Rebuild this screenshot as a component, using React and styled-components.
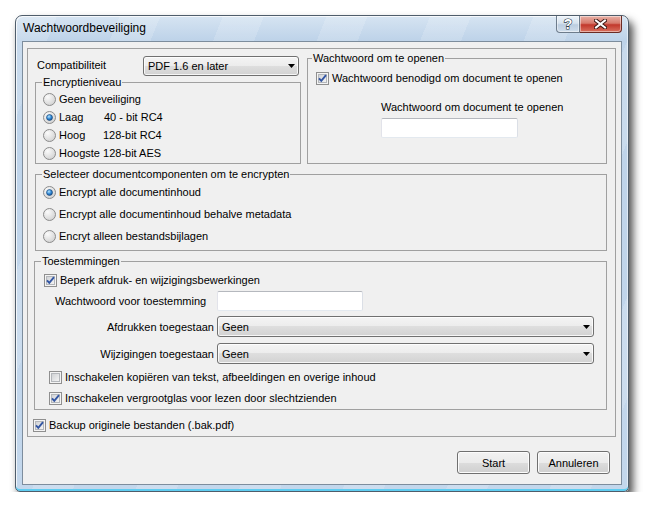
import React from 'react';
import styled, { createGlobalStyle } from 'styled-components';

const GlobalStyle = createGlobalStyle`
  html, body {
    margin: 0;
    background: #fff;
  }
  body {
    font-family: "Liberation Sans", Arial, sans-serif;
    font-size: 11px;
    color: #000;
  }
  * {
    box-sizing: border-box;
  }
`;

const Page = styled.div`
  padding: 15px 0 0 15px;
`;

const Window = styled.div`
  width: 614px;
  height: 477px;
  display: flex;
  flex-direction: column;
  border: 1px solid #4f5d6b;
  border-radius: 7px 7px 5px 5px;
  background:
    repeating-linear-gradient(112deg, rgba(255, 255, 255, 0.16) 0 38px, rgba(255, 255, 255, 0) 38px 96px),
    linear-gradient(180deg, #d6e4f2 0, #bed3e9 24px, #c3d7ec 100%);
  box-shadow:
    inset 0 -2px 0 #5fcdf1,
    inset 1px 1px 0 rgba(255, 255, 255, 0.75),
    inset -1px 0 0 rgba(255, 255, 255, 0.5),
    4px 6px 9px rgba(0, 0, 0, 0.7);
`;

const TitleBar = styled.div`
  height: 25px;
  display: flex;
  justify-content: space-between;
  align-items: flex-start;
`;

const Title = styled.div`
  padding-left: 7px;
  line-height: 25px;
  font-size: 12px;
`;

const CaptionGroup = styled.div`
  display: flex;
  margin-right: 6px;
`;

const CaptionButton = styled.div`
  width: ${({ $w }) => $w}px;
  height: 17px;
  display: flex;
  align-items: center;
  justify-content: center;
  border: 1px solid ${({ $close }) => ($close ? '#6b2b24' : '#6d7c8c')};
  border-top: none;
  border-left-width: ${({ $close }) => ($close ? 0 : 1)}px;
  border-radius: ${({ $close }) => ($close ? '0 0 4px 0' : '0 0 0 4px')};
  background: ${({ $close }) =>
    $close
      ? 'linear-gradient(180deg, #e8b1a6 0, #d77a6c 45%, #c2382c 55%, #d9715f 100%)'
      : 'linear-gradient(180deg, #edf3f9 0, #d7e3ef 45%, #bccde0 55%, #d0deec 100%)'};
  box-shadow: inset 0 0 0 1px rgba(255, 255, 255, 0.45);
`;

const Client = styled.div`
  flex: 1;
  margin: 0 6px 6px 6px;
  display: flex;
  flex-direction: column;
  background: #f0f0f0;
  border: 1px solid #7d8d9d;
`;

const Panel = styled.div`
  flex: 1;
  margin: 6px 5px 0 4px;
  padding: 3px 8px 2px 7px;
  display: flex;
  flex-direction: column;
  border: 1px solid #a0a0a0;
`;

const TopRow = styled.div`
  height: 112px;
  display: grid;
  grid-template-columns: 266px 300px;
  column-gap: 6px;
`;

const Column = styled.div`
  display: flex;
  flex-direction: column;
`;

const CompatRow = styled.div`
  height: 20px;
  margin-top: 4px;
  padding: 0 2px;
  display: flex;
  align-items: center;
  justify-content: space-between;
`;

const CompatLabel = styled.span`
  margin-bottom: 3px;
`;

const Group = styled.fieldset`
  margin: ${({ $top = 0 }) => $top}px 0 0 ${({ $left = 0 }) => $left}px;
  min-width: 0;
  flex: ${({ $grow }) => ($grow ? 1 : 'none')};
  padding: ${({ $pad }) => $pad};
  border: 1px solid #a0a0a0;
  display: flex;
  flex-direction: column;
`;

const Legend = styled.legend`
  padding: 0 1px;
  margin-left: ${({ $shift = -1 }) => $shift}px;
  line-height: 13px;
  font-size: 11px;
`;

const Option = styled.label`
  height: ${({ $h = 18 }) => $h}px;
  margin: ${({ $top = 0 }) => $top}px 0 0 ${({ $indent = 0 }) => $indent}px;
  display: flex;
  align-items: center;
  gap: 3px;
  white-space: nowrap;
`;

const Key = styled.span`
  display: inline-block;
  width: ${({ $w }) => $w}px;
`;

const OpenBlock = styled.div`
  margin: 14px 0 0 65px;
  display: flex;
  flex-direction: column;
  gap: 4px;
`;

const Caption = styled.div`
  line-height: 13px;
`;

const FormRow = styled.div`
  margin: ${({ $top = 0 }) => $top}px 0 0 11px;
  display: grid;
  grid-template-columns: 159px auto;
  column-gap: 3px;
  align-items: center;
  justify-content: start;
`;

const FormLabel = styled.span`
  justify-self: ${({ $right }) => ($right ? 'end' : 'start')};
  white-space: nowrap;
`;

const TextBox = styled.div`
  width: ${({ $w }) => $w}px;
  height: 20px;
  background: #fff;
  border: 1px solid;
  border-color: #b5b8be #dbdfe6 #e3e9ef #e2e3ea;
  border-radius: 2px;
`;

const SelectBox = styled.div`
  width: ${({ $w }) => $w}px;
  height: ${({ $h = 21 }) => $h}px;
  padding: 0 3px 0 4px;
  display: flex;
  align-items: center;
  justify-content: space-between;
  border: 1px solid #707070;
  border-radius: 3px;
  background: linear-gradient(180deg, #f4f4f4 0, #ececec 50%, #dedede 50%, #d2d2d2 100%);
  box-shadow: inset 0 0 0 1px rgba(255, 255, 255, 0.8);
`;

const BackupRow = styled(Option)`
  margin: 6px 0 0 -2px;
`;

const Footer = styled.div`
  padding: 14px 11px 10px;
  display: flex;
  justify-content: flex-end;
  gap: 7px;
`;

const Button = styled.button`
  width: 73px;
  height: 23px;
  padding: 0;
  font: inherit;
  color: #000;
  border: 1px solid #707070;
  border-radius: 3px;
  background: linear-gradient(180deg, #f2f2f2 0, #ebebeb 50%, #dddddd 50%, #cfcfcf 100%);
  box-shadow: inset 0 0 0 1px #fcfcfc;
`;

const Arrow = () => (
  <svg width="7" height="4" viewBox="0 0 7 4">
    <path d="M0 0h7L3.5 4z" fill="#000" />
  </svg>
);

const Select = ({ value, w, h }) => (
  <SelectBox $w={w} $h={h}>
    <span>{value}</span>
    <Arrow />
  </SelectBox>
);

const Checkbox = ({ checked }) => (
  <svg width="13" height="13" viewBox="0 0 13 13">
    <defs>
      <linearGradient id="cbFill" x1="0" y1="0" x2="1" y2="1">
        <stop offset="0" stopColor="#cfd1d4" />
        <stop offset="1" stopColor="#f6f6f6" />
      </linearGradient>
    </defs>
    <rect x="0.5" y="0.5" width="12" height="12" fill="#f4f4f4" stroke="#8f8f8f" />
    <rect x="2.5" y="2.5" width="8" height="8" fill="url(#cbFill)" stroke="#b4b7bb" />
    {checked && (
      <path d="M3 6.3l2.3 2.6L10 3.2" fill="none" stroke="#3356a3" strokeWidth="1.9" />
    )}
  </svg>
);

const Radio = ({ checked }) => (
  <svg width="13" height="13" viewBox="0 0 13 13">
    <defs>
      <radialGradient id="rdFill" cx="0.35" cy="0.3" r="0.8">
        <stop offset="0" stopColor="#fbfbfb" />
        <stop offset="1" stopColor="#cfcfcf" />
      </radialGradient>
      <radialGradient id="rdDot" cx="0.4" cy="0.35" r="0.7">
        <stop offset="0" stopColor="#b6e6ff" />
        <stop offset="0.55" stopColor="#2f86d4" />
        <stop offset="1" stopColor="#0d4a8a" />
      </radialGradient>
    </defs>
    <circle cx="6.5" cy="6.5" r="6" fill="url(#rdFill)" stroke="#8c8c8c" />
    {checked && <circle cx="6.5" cy="6.5" r="3" fill="url(#rdDot)" stroke="#1c4775" strokeWidth="0.6" />}
  </svg>
);

const HelpGlyph = () => (
  <svg width="12" height="14" viewBox="0 0 12 14">
    <text
      x="6"
      y="12"
      textAnchor="middle"
      fontFamily="Liberation Sans, Arial, sans-serif"
      fontWeight="bold"
      fontSize="14"
      fill="#fff"
      stroke="#2d3b49"
      strokeWidth="1.2"
      paintOrder="stroke"
    >
      ?
    </text>
  </svg>
);

const CloseGlyph = () => (
  <svg width="13" height="10" viewBox="0 0 13 10">
    <path d="M2 1.5l9 7M11 1.5l-9 7" stroke="#3a1612" strokeWidth="4" strokeLinecap="square" />
    <path d="M2 1.5l9 7M11 1.5l-9 7" stroke="#fff" strokeWidth="2" strokeLinecap="square" />
  </svg>
);

const App = () => (
  <Page>
    <GlobalStyle />
    <Window>
      <TitleBar>
        <Title>Wachtwoordbeveiliging</Title>
        <CaptionGroup>
          <CaptionButton $w={24}>
            <HelpGlyph />
          </CaptionButton>
          <CaptionButton $w={42} $close>
            <CloseGlyph />
          </CaptionButton>
        </CaptionGroup>
      </TitleBar>

      <Client>
        <Panel>
          <TopRow>
            <Column>
              <CompatRow>
                <CompatLabel>Compatibiliteit</CompatLabel>
                <Select value="PDF 1.6 en later" w={156} h={20} />
              </CompatRow>
              <Group $grow $pad="1px 0 1px 7px">
                <Legend>Encryptieniveau</Legend>
                <Option>
                  <Radio />
                  Geen beveiliging
                </Option>
                <Option>
                  <Radio checked />
                  <span>
                    <Key $w={45}>Laag</Key>40 - bit RC4
                  </span>
                </Option>
                <Option>
                  <Radio />
                  <span>
                    <Key $w={44}>Hoog</Key>128-bit RC4
                  </span>
                </Option>
                <Option>
                  <Radio />
                  Hoogste 128-bit AES
                </Option>
              </Group>
            </Column>

            <Group $pad="4px 0 0 8px">
              <Legend $shift={-4}>Wachtwoord om te openen</Legend>
              <Option>
                <Checkbox checked />
                Wachtwoord benodigd om document te openen
              </Option>
              <OpenBlock>
                <Caption>Wachtwoord om document te openen</Caption>
                <TextBox $w={137} />
              </OpenBlock>
            </Group>
          </TopRow>

          <Group $top={4} $pad="0 0 3px 7px">
            <Legend>Selecteer documentcomponenten om te encrypten</Legend>
            <Option $h={22}>
              <Radio checked />
              Encrypt alle documentinhoud
            </Option>
            <Option $h={22}>
              <Radio />
              Encrypt alle documentinhoud behalve metadata
            </Option>
            <Option $h={22}>
              <Radio />
              Encryt alleen bestandsbijlagen
            </Option>
          </Group>

          <Group $top={4} $left={-1} $pad="3px 0 2px 9px">
            <Legend $shift={-3}>Toestemmingen</Legend>
            <Option>
              <Checkbox checked />
              Beperk afdruk- en wijzigingsbewerkingen
            </Option>
            <FormRow $top={2}>
              <FormLabel>Wachtwoord voor toestemming</FormLabel>
              <TextBox $w={146} />
            </FormRow>
            <FormRow $top={5}>
              <FormLabel $right>Afdrukken toegestaan</FormLabel>
              <Select value="Geen" w={377} />
            </FormRow>
            <FormRow $top={6}>
              <FormLabel $right>Wijzigingen toegestaan</FormLabel>
              <Select value="Geen" w={377} />
            </FormRow>
            <Option $indent={5} $top={4}>
              <Checkbox />
              Inschakelen kopiëren van tekst, afbeeldingen en overige inhoud
            </Option>
            <Option $indent={5} $top={3}>
              <Checkbox checked />
              Inschakelen vergrootglas voor lezen door slechtzienden
            </Option>
          </Group>

          <BackupRow>
            <Checkbox checked />
            Backup originele bestanden (.bak.pdf)
          </BackupRow>
        </Panel>

        <Footer>
          <Button>Start</Button>
          <Button>Annuleren</Button>
        </Footer>
      </Client>
    </Window>
  </Page>
);

export default App;
